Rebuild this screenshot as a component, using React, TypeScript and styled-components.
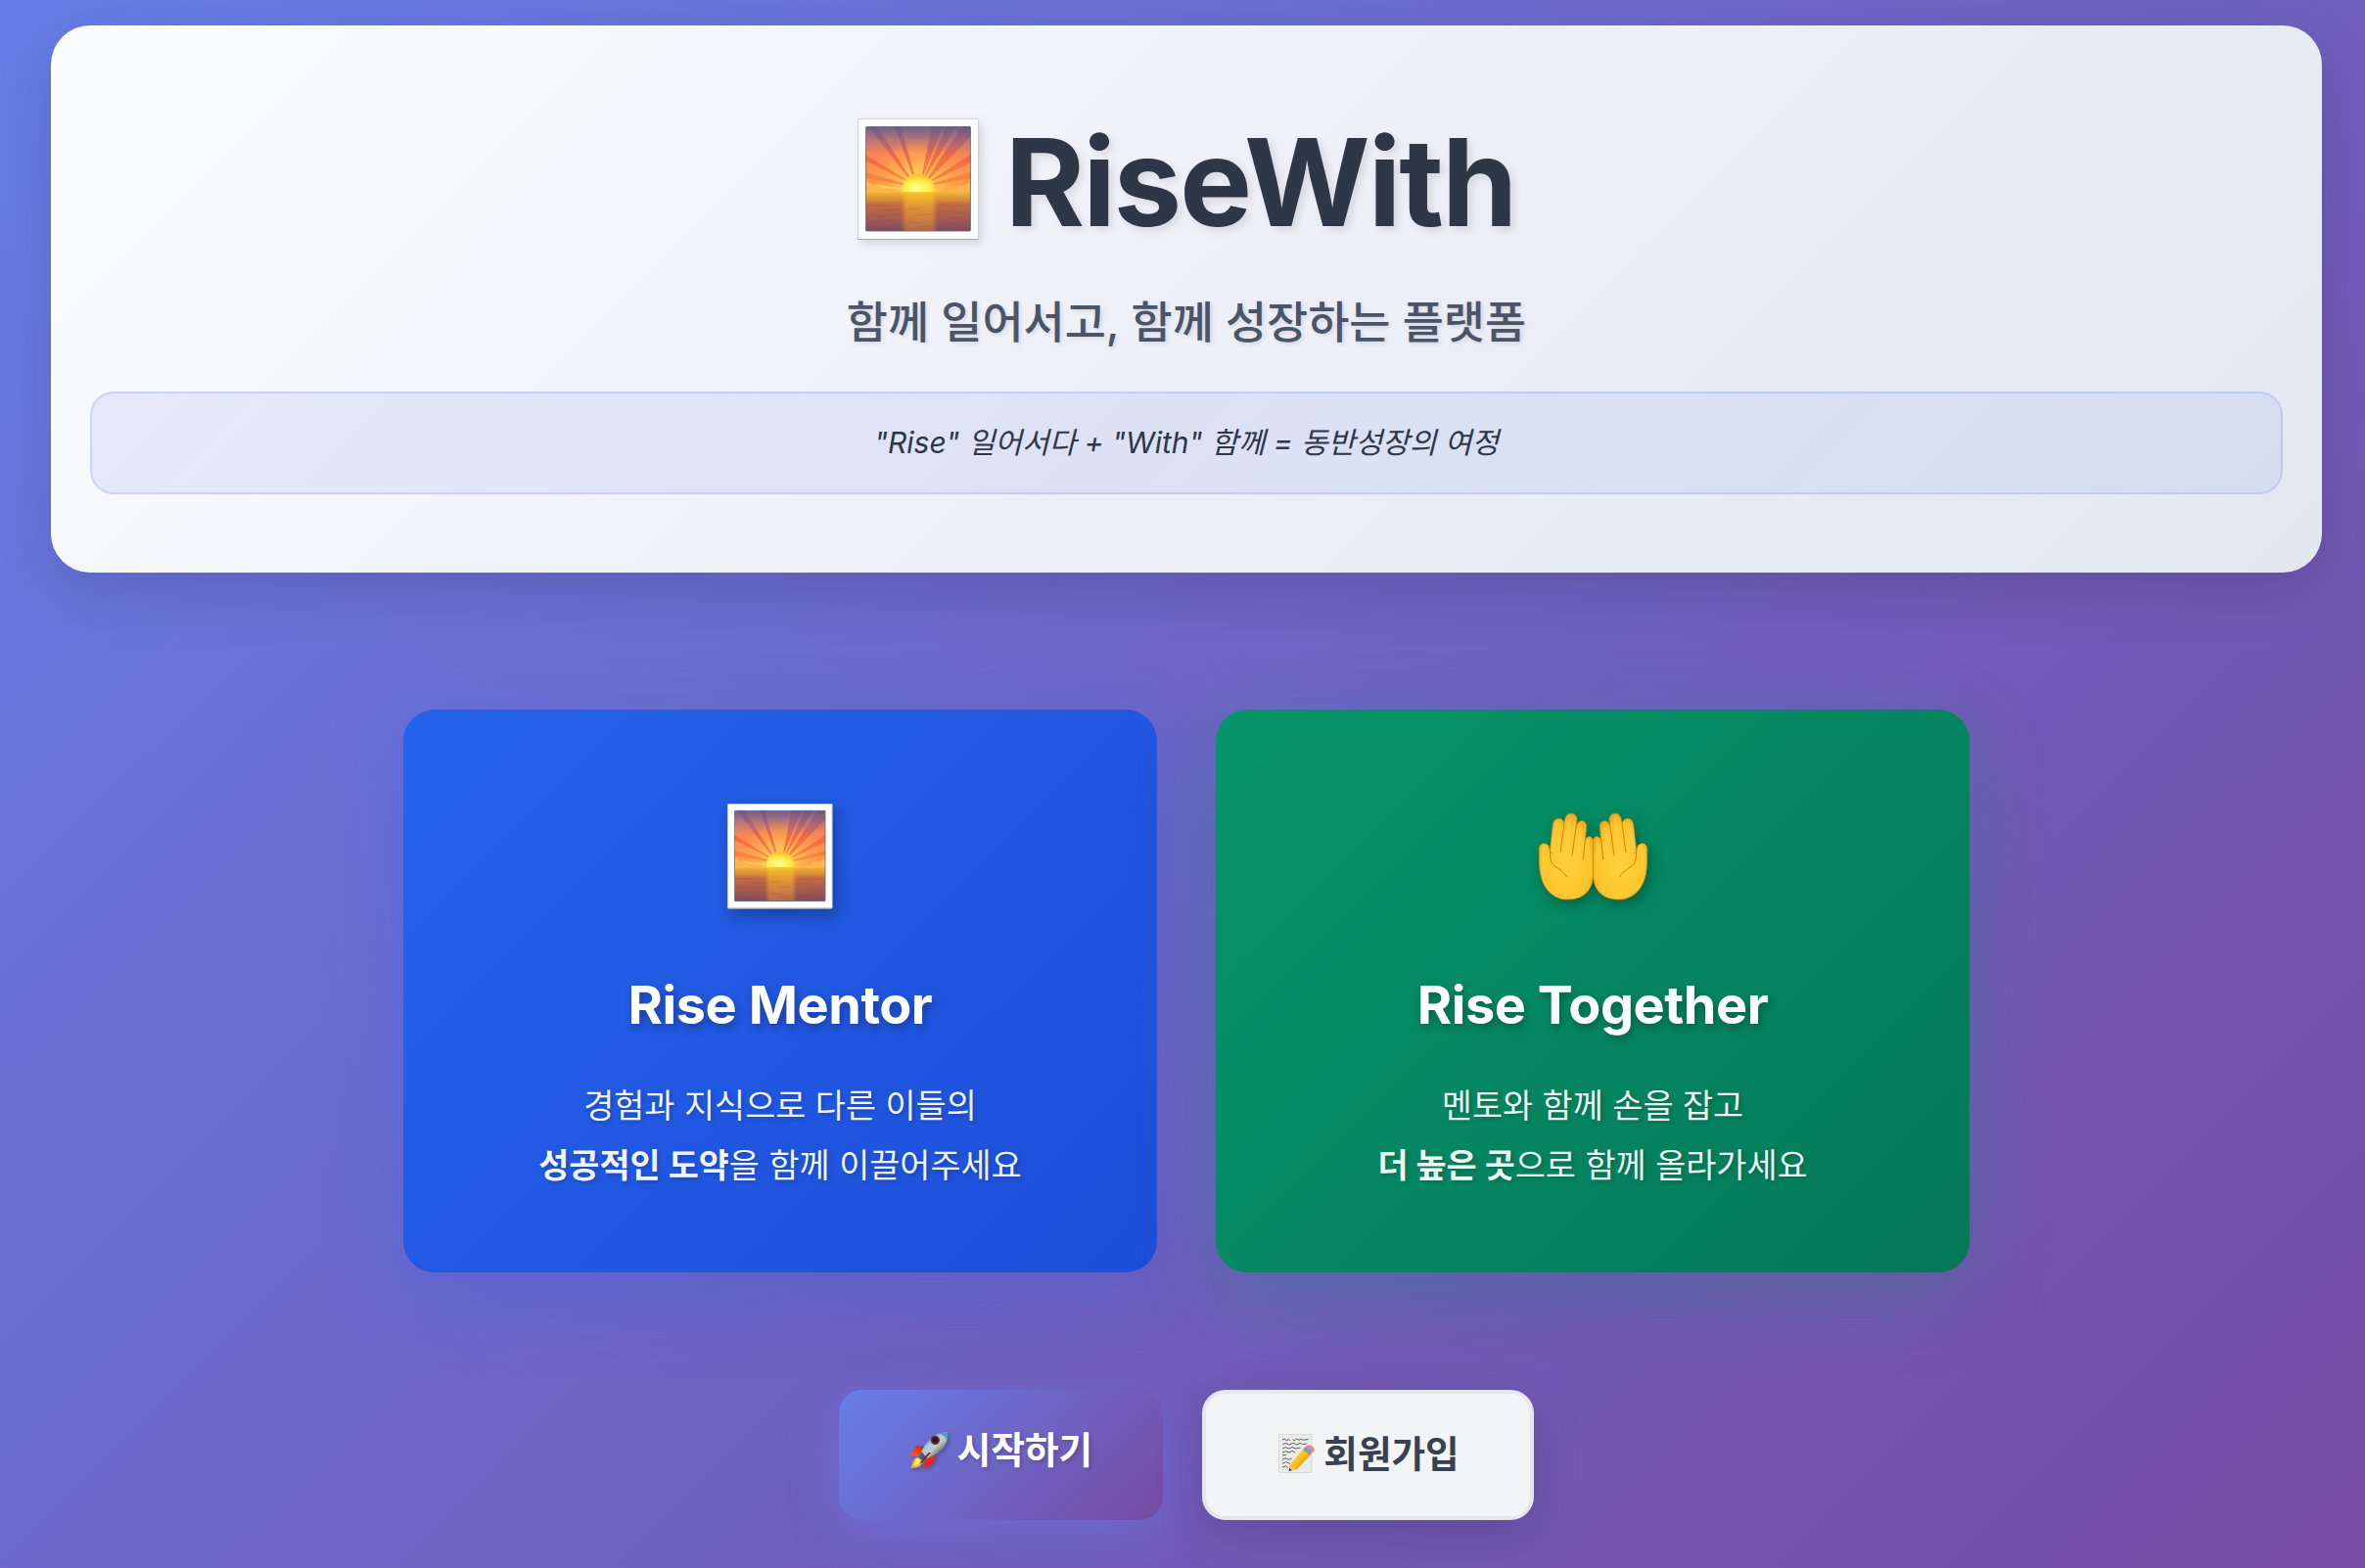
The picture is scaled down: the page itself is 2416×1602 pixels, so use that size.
import React from 'react';
import styled, { createGlobalStyle, css } from 'styled-components';

const GlobalStyle = createGlobalStyle`
  * { box-sizing: border-box; margin: 0; padding: 0; }
  body {
    font-family: Inter, 'Noto Sans CJK KR', sans-serif;
    -webkit-font-smoothing: antialiased;
    overflow: hidden;
  }
`;

const Page = styled.main`
  height: 1602px;
  padding: 26px 44px 0 52px;
  background: linear-gradient(135deg, #667ee8 0%, #764ba2 100%);
  overflow: hidden;
`;

const Hero = styled.header`
  height: 559px;
  padding: 95px 40px 0;
  border-radius: 40px;
  background: linear-gradient(135deg, #fcfdfe 0%, #edf0f8 50%, #e2e8f0 100%);
  box-shadow: 0 20px 60px rgba(0, 0, 0, 0.14);
  display: flex;
  flex-direction: column;
  align-items: center;
`;

const Brand = styled.h1`
  height: 124px;
  display: flex;
  align-items: center;
  gap: 27px;
  font-size: 124px;
  line-height: 124px;
  font-weight: 700;
  letter-spacing: -2px;
  color: #2d3748;
  white-space: nowrap;
  text-shadow: 4px 4px 8px rgba(0, 0, 0, 0.1);
`;

const BrandName = styled.span`
  padding-top: 6px;
`;

const Tagline = styled.p`
  margin-top: 50px;
  height: 70px;
  line-height: 70px;
  font-size: 45.8px;
  font-weight: 500;
  color: #4a5568;
  white-space: nowrap;
  text-shadow: 2px 2px 4px rgba(0, 0, 0, 0.1);
`;

const Motto = styled.p`
  margin-top: 35px;
  align-self: stretch;
  height: 105px;
  padding-bottom: 6px;
  border: 2px solid rgba(102, 126, 234, 0.2);
  border-radius: 24px;
  background: linear-gradient(135deg, rgba(102, 126, 234, 0.13), rgba(102, 126, 234, 0.1));
  display: flex;
  align-items: center;
  justify-content: center;
  font-size: 30.05px;
  font-style: italic;
  color: #2d3748;
  white-space: pre;
`;

const Cards = styled.section`
  width: 1600px;
  margin: 140px auto 0;
  display: grid;
  grid-template-columns: 1fr 1fr;
  gap: 60px;
`;

const tones = {
  blue: css`
    background: linear-gradient(135deg, #2563eb 0%, #1d4ed8 100%);
    box-shadow: 0 24px 80px rgba(37, 99, 235, 0.25);
  `,
  green: css`
    background: linear-gradient(135deg, #059669 0%, #047857 100%);
    box-shadow: 0 24px 80px rgba(5, 150, 105, 0.25);
  `,
};

const Card = styled.article<{ $tone: 'blue' | 'green' }>`
  height: 575px;
  padding-top: 96px;
  border-radius: 32px;
  color: #fff;
  display: flex;
  flex-direction: column;
  align-items: center;
  ${({ $tone }) => tones[$tone]}
`;

const CardIcon = styled.div`
  height: 108px;
  display: flex;
  align-items: center;
`;

const CardTitle = styled.h2`
  margin-top: 63px;
  font-size: 54px;
  line-height: 70px;
  font-weight: 700;
  letter-spacing: -0.45px;
  white-space: nowrap;
  text-shadow: 2px 4px 8px rgba(0, 0, 0, 0.3);
`;

const CardText = styled.p`
  margin-top: 36.5px;
  font-size: 33.8px;
  line-height: 61.2px;
  text-align: center;
  white-space: nowrap;
  color: rgba(255, 255, 255, 0.94);
  text-shadow: 2px 2px 4px rgba(0, 0, 0, 0.2);
`;

const Actions = styled.nav`
  margin-top: 120px;
  display: flex;
  justify-content: center;
  gap: 40px;
`;

const Action = styled.button<{ $primary?: boolean }>`
  width: ${({ $primary }) => ($primary ? 331 : 339)}px;
  height: 133px;
  border-radius: 24px;
  border: ${({ $primary }) => ($primary ? 'none' : '4px solid #e5e7eb')};
  padding: ${({ $primary }) => ($primary ? '0 0 10px' : '0 0 3px 2px')};
  display: flex;
  align-items: center;
  justify-content: center;
  gap: 9px;
  font-family: inherit;
  font-size: 37.6px;
  font-weight: 700;
  white-space: nowrap;
  color: ${({ $primary }) => ($primary ? '#fff' : '#374151')};
  background: ${({ $primary }) =>
    $primary ? 'linear-gradient(135deg, #667eea 0%, #764ba2 100%)' : '#f3f4f6'};
  box-shadow: ${({ $primary }) =>
    $primary ? '0 16px 50px rgba(102, 126, 234, 0.4)' : '0 16px 50px rgba(0, 0, 0, 0.15)'};
  text-shadow: ${({ $primary }) => ($primary ? '2px 2px 4px rgba(0, 0, 0, 0.2)' : 'none')};
`;

const ActionLabel = styled.span`
  padding-bottom: 6px;
`;

const Drawing = styled.svg<{ $shadow?: string }>`
  display: block;
  flex: none;
  overflow: visible;
  filter: ${({ $shadow }) => ($shadow ? `drop-shadow(${$shadow})` : 'none')};
`;

const Sunrise = ({ size, id, shadow }: { size: number; id: string; shadow: string }) => (
  <Drawing width={size} height={size} viewBox="0 0 124 124" $shadow={shadow}>
    <defs>
      <linearGradient id={`${id}-sky`} x1="0" y1="0" x2="0" y2="1">
        <stop offset="0" stopColor="#66608c" />
        <stop offset="0.2" stopColor="#b87578" />
        <stop offset="0.42" stopColor="#f98552" />
        <stop offset="0.75" stopColor="#fd9a4a" />
        <stop offset="1" stopColor="#fb9440" />
      </linearGradient>
      <radialGradient id={`${id}-glow`} gradientUnits="userSpaceOnUse" cx="62" cy="70" r="50">
        <stop offset="0" stopColor="#ffe45c" />
        <stop offset="0.4" stopColor="#ffc955" stopOpacity="0.8" />
        <stop offset="0.75" stopColor="#ffae50" stopOpacity="0.4" />
        <stop offset="1" stopColor="#ff9a50" stopOpacity="0" />
      </radialGradient>
      <linearGradient id={`${id}-ray`} x1="0" y1="0" x2="0" y2="1">
        <stop offset="0" stopColor="#665887" />
        <stop offset="0.3" stopColor="#b65f70" />
        <stop offset="0.55" stopColor="#f2643f" />
        <stop offset="1" stopColor="#f9873c" />
      </linearGradient>
      <radialGradient id={`${id}-sun`} cx="0.45" cy="0.75" r="0.8">
        <stop offset="0" stopColor="#ffff91" />
        <stop offset="0.5" stopColor="#ffee4a" />
        <stop offset="1" stopColor="#f2b41c" />
      </radialGradient>
      <linearGradient id={`${id}-sea`} x1="0" y1="0" x2="0" y2="1">
        <stop offset="0" stopColor="#f0b42d" />
        <stop offset="0.16" stopColor="#de9338" />
        <stop offset="0.32" stopColor="#c26a45" />
        <stop offset="0.65" stopColor="#a65b4f" />
        <stop offset="1" stopColor="#7d4a60" />
      </linearGradient>
      <linearGradient id={`${id}-path`} x1="0" y1="0" x2="0" y2="1">
        <stop offset="0" stopColor="#f5c22a" />
        <stop offset="0.4" stopColor="#e29634" stopOpacity="0.9" />
        <stop offset="1" stopColor="#cf7c42" stopOpacity="0.6" />
      </linearGradient>
      <linearGradient id={`${id}-fade`} x1="0" y1="0" x2="1" y2="0">
        <stop offset="0" stopColor="#000" />
        <stop offset="0.16" stopColor="#fff" />
        <stop offset="0.84" stopColor="#fff" />
        <stop offset="1" stopColor="#000" />
      </linearGradient>
      <mask id={`${id}-soft`}>
        <rect x="44" y="75" width="38" height="42" fill={`url(#${id}-fade)`} />
      </mask>
      <clipPath id={`${id}-clip`}>
        <rect x="8.6" y="8.4" width="106.8" height="106.6" rx="1" />
      </clipPath>
    </defs>
    <rect x="0.5" y="0.5" width="123" height="123" rx="1" fill="#fff" stroke="#cfd3d6" />
    <path d="M0.5 123.5H123.5" stroke="#9eabae" strokeWidth="1" />
    <g clipPath={`url(#${id}-clip)`}>
      <rect x="8" y="8" width="108" height="68" fill={`url(#${id}-sky)`} />
      <rect x="8" y="8" width="108" height="68" fill={`url(#${id}-glow)`} />
      <path
        fill={`url(#${id}-ray)`}
        opacity="0.85"
        d="M38 8H44L58 57L56 58ZM11 8H20L53 59L51.500 60.500ZM8 37V43L48 63.500L49 62ZM8 55V61L46 68L47 66ZM76 8H87L67.500 58L66 57ZM91 8H101L70 59L68.500 58.500ZM107 8H116V18L74 61.500L72 60ZM116 37V45L77 64L76 62.500ZM116 55V61L78 68V66Z"
      />
      <path d="M8 65C12 64 13 66 16 68C21 66 24 68 27 71C32 70 35 73 36 76H8Z" fill="#ffb450" />
      <path d="M116 66C111 65 109 69 106 69C102 67 99 70 97 72C93 71 90 74 89 76H116Z" fill="#ffb450" />
      <path d="M18 68L46 71V73L28 71Z" fill="#ffd35b" />
      <path d="M45.800 76C45 65 53 57 62.300 57C72 57 79.500 65 78.800 76Z" fill={`url(#${id}-sun)`} />
      <rect x="8" y="75.500" width="108" height="40" fill={`url(#${id}-sea)`} />
      <rect x="44" y="75.500" width="38" height="41" fill={`url(#${id}-path)`} mask={`url(#${id}-soft)`} />
      <path
        d="M9 89L24 88L31 90M27 94L43 93M10 98L27 100L42 98M18 105L34 103M9 110L24 112L39 110M84 88L98 90L112 88M82 96L94 94L106 97M91 102L114 101M84 109L96 107L108 110M50 93L63 92M60 99L75 98M51 105L65 107M61 111L76 110"
        stroke="#74464b"
        strokeWidth="0.8"
        opacity="0.25"
        fill="none"
      />
    </g>
    <rect x="8.600" y="8.400" width="106.800" height="106.600" rx="1" fill="none" stroke="#58646c" strokeWidth="0.8" />
  </Drawing>
);

const Hand = () => (
  <g>
    <path
      fill="url(#skin)"
      stroke="#d99113"
      strokeWidth="2"
      d="M66 171C66 150 93 149 97 168L99 176L108 97C111 72 139 73 142 93L146 78C150 56 181 58 182 80L181 100C185 78 212 81 211 103L207 147C211 128 232 130 231 147L231 255C229 300 199 327 153 326C108 326 77 291 70 247C65 226 66 195 66 171Z"
    />
    <path
      fill="none"
      stroke="#c58410"
      strokeWidth="3"
      strokeLinecap="round"
      d="M97 165C101 185 98 205 106 216C117 230 139 235 150 256M101 181L105 184M143 93L131 182M182 83L167 191M207 140L201 202"
    />
    <path
      fill="none"
      stroke="#ffdf62"
      strokeWidth="7"
      opacity="0.3"
      strokeLinecap="round"
      d="M121 92L113 167M162 77L151 172M196 100L186 185M218 145L216 200M79 171L80 237"
    />
  </g>
);

const Palms = () => (
  <Drawing width="111" height="88.300" viewBox="65 62 333 265" $shadow="3px 5px 7px rgba(0,0,0,0.3)">
    <defs>
      <radialGradient id="skin" cx="0.5" cy="0.6" r="0.62">
        <stop offset="0" stopColor="#ffd13c" />
        <stop offset="0.72" stopColor="#fdc52d" />
        <stop offset="1" stopColor="#eda41b" />
      </radialGradient>
    </defs>
    <Hand />
    <g transform="translate(463 0) scale(-1 1)">
      <Hand />
    </g>
  </Drawing>
);

const Rocket = () => (
  <Drawing width="40" height="38" viewBox="269 186 120 114" $shadow="2px 2px 2px rgba(0,0,0,0.25)">
    <defs>
      <linearGradient id="hull" x1="0.2" y1="0.2" x2="0.75" y2="0.8">
        <stop offset="0" stopColor="#3f7fae" />
        <stop offset="0.35" stopColor="#a5cfe3" />
        <stop offset="0.6" stopColor="#c0c8c5" />
        <stop offset="1" stopColor="#4f5b5c" />
      </linearGradient>
      <linearGradient id="fin" x1="0" y1="1" x2="1" y2="0">
        <stop offset="0" stopColor="#ff6b18" />
        <stop offset="1" stopColor="#d11712" />
      </linearGradient>
    </defs>
    <path d="M318 231L290 229L270 259L306 262Z" fill="url(#fin)" />
    <path d="M347 252L344 279L313 300L320 266Z" fill="#ee2416" />
    <path d="M293 263C279 267 282 278 273 297C289 295 304 299 311 274Z" fill="#f6b722" />
    <path d="M294 267C286 272 290 280 281 289C293 289 301 283 303 274Z" fill="#fff27a" />
    <path d="M386 188C358 186 330 199 306 246L298 262L311 275L325 267C369 249 390 224 386 188Z" fill="url(#hull)" />
    <path d="M306 246L298 262L311 275L324 267Z" fill="#365f80" />
    <path d="M328 249L304 277L302 285L335 250Z" fill="#9e1717" />
    <path d="M386 188C375 187 365 189 359 192C374 194 382 204 383 214C386 206 387 196 386 188Z" fill="#5f9ab7" />
    <circle cx="348" cy="211" r="14" fill="#8e1f25" />
    <circle cx="348" cy="211" r="9" fill="#17232c" />
  </Drawing>
);

const Memo = () => (
  <Drawing width="37" height="40" viewBox="290 195 111 120">
    <defs>
      <linearGradient id="pencil" x1="0.2" y1="0.2" x2="0.8" y2="0.8">
        <stop offset="0" stopColor="#ffdc3c" />
        <stop offset="0.55" stopColor="#f6b81d" />
        <stop offset="1" stopColor="#bd7b10" />
      </linearGradient>
    </defs>
    <rect x="292" y="197" width="100" height="116" fill="#ebebe9" stroke="#cfcfcd" strokeWidth="2" />
    <path
      d="M302 214L309 210L315 215L321 212L326 215M333 212L340 215L346 210L353 214L360 211L367 214L382 211M303 227L313 223L322 228L336 223L346 228L358 223L363 227L376 225M302 240L312 236L322 240L332 236L343 240L358 237M302 252L312 248L323 252L332 247L341 252M302 261L314 259M302 274L311 269L322 274L331 270M302 286L313 281L326 286M302 298L312 293L319 298"
      fill="none"
      stroke="#555b60"
      strokeWidth="3"
    />
    <path d="M324 291L370 236L393 254L346 304L323 309Z" fill="url(#pencil)" />
    <path d="M324 291L346 304L323 309Z" fill="#e9c48b" />
    <path d="M324 300L331 306L322 309Z" fill="#252525" />
    <path d="M365 243L375 232L396 249L386 260Z" fill="#8d9ba5" />
    <path d="M375 232C384 222 407 238 398 249L395 252Z" fill="#ef8491" />
  </Drawing>
);

export default function App() {
  return (
    <>
      <GlobalStyle />
      <Page>
        <Hero>
          <Brand>
            <Sunrise size={124} id="brand" shadow="3px 4px 4px rgba(0,0,0,0.12)" />
            <BrandName>RiseWith</BrandName>
          </Brand>
          <Tagline>함께 일어서고, 함께 성장하는 플랫폼</Tagline>
          <Motto>"Rise" 일어서다 + "With" 함께 = 동반성장의 여정</Motto>
        </Hero>
        <Cards>
          <Card $tone="blue">
            <CardIcon>
              <Sunrise size={107.5} id="mentor" shadow="4px 6px 8px rgba(0,0,0,0.3)" />
            </CardIcon>
            <CardTitle>Rise Mentor</CardTitle>
            <CardText>
              경험과 지식으로 다른 이들의
              <br />
              <strong>성공적인 도약</strong>을 함께 이끌어주세요
            </CardText>
          </Card>
          <Card $tone="green">
            <CardIcon>
              <Palms />
            </CardIcon>
            <CardTitle>Rise Together</CardTitle>
            <CardText>
              멘토와 함께 손을 잡고
              <br />
              <strong>더 높은 곳</strong>으로 함께 올라가세요
            </CardText>
          </Card>
        </Cards>
        <Actions>
          <Action $primary>
            <Rocket />
            <ActionLabel>시작하기</ActionLabel>
          </Action>
          <Action>
            <Memo />
            <ActionLabel>회원가입</ActionLabel>
          </Action>
        </Actions>
      </Page>
    </>
  );
}
